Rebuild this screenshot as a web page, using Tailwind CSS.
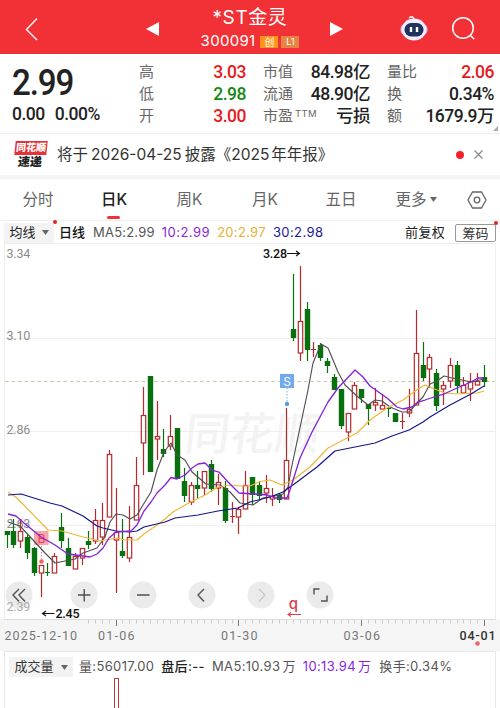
<!DOCTYPE html>
<html lang="zh-CN">
<head>
    <meta charset="UTF-8">
    <meta name="viewport" content="width=device-width, initial-scale=1.0">
    <title>*ST金灵 300091</title>
    <script src="https://cdn.jsdelivr.net/npm/@tailwindcss/browser@4"></script>
</head>
<body class="w-[500px] h-[708px] overflow-hidden bg-white font-[Inter,'Noto_Sans_CJK_SC',sans-serif] text-[#333] whitespace-nowrap">
    <!-- Title bar -->
    <header class="h-[54px] bg-[#f23136] text-white grid grid-cols-[159px_182px_159px]">
        <div class="flex items-center justify-between pl-[25px] pt-[3px]">
            <svg class="w-[14px] h-6" viewBox="0 0 14 24" fill="none" stroke="#fff" stroke-width="1.4"><path d="M12 1.5 1.5 12.5 12 23"/></svg>
            <svg class="w-[13px] h-[14px]" viewBox="0 0 13 14" fill="#fff"><path d="M0 7 13 0v14z"/></svg>
        </div>
        <div class="flex flex-col items-center pt-[6px]">
            <div class="text-[19px] leading-[23px] tracking-[0.6px]">*ST金灵</div>
            <div class="flex items-center gap-[3px] h-[26px] -mt-px">
                <span class="text-[15px] mr-[2px] tracking-[0.3px]">300091</span>
                <span class="w-[18px] h-[12px] mt-px bg-[#ff9418] text-[10px] leading-[12px] text-center">创</span>
                <span class="w-[18px] h-[12px] mt-px bg-[#e58543] text-[9px] leading-[12px] text-center">L1</span>
            </div>
        </div>
        <div class="flex items-center justify-between pr-[24px] pt-[3px]">
            <svg class="w-[13px] h-[14px] -ml-[11px]" viewBox="0 0 13 14" fill="#fff"><path d="M13 7 0 0v14z"/></svg>
            <div class="flex items-center gap-[23px]">
                <svg class="w-[28px] h-[27px]" viewBox="0 0 28 27">
                    <path d="M9 3q3-3 5 1" fill="none" stroke="#fff" stroke-width="1.5"/>
                    <rect x="0.5" y="9" width="27" height="11" rx="5" fill="#c9c3f4"/>
                    <ellipse cx="14" cy="14.5" rx="12.3" ry="11" fill="#f3edff"/>
                    <rect x="4.5" y="8" width="19" height="13.5" rx="6.5" fill="#20335c"/>
                    <path d="M11 12v5M17 12v5" stroke="#fff" stroke-width="2.4"/>
                </svg>
                <svg class="w-[25px] h-[25px]" viewBox="0 0 25 25" fill="none" stroke="#fff" stroke-width="1.5"><circle cx="12" cy="12" r="10.3"/><path d="m19.3 19.3 3.9 3.9"/></svg>
            </div>
        </div>
    </header>

    <!-- Quote -->
    <section class="relative h-[80px] flex pl-[12px] pr-[6px] border-b border-[#eee] text-[#222]">
        <div class="w-[127px] font-[Roboto] font-medium">
            <div class="text-[36px] leading-[36px] pt-[11px] tracking-[-1.2px] scale-x-[0.92] origin-left">2.99</div>
            <div class="flex gap-[10px] text-[17.5px] leading-5 pt-[3px] tracking-[-0.5px]"><span>0.00</span><span>0.00%</span></div>
        </div>
        <div class="grid grid-cols-3 gap-x-[17px] w-[355px] pt-[7px] auto-rows-[22px] text-[15px] leading-[22px] [&>div]:flex [&>div]:justify-between [&_b]:font-medium [&_b]:text-[17.500px] [&_b]:font-[Roboto,'Noto_Sans_CJK_SC'] [&_b]:tracking-[-0.5px] [&_span]:text-[#666]">
            <div><span>高</span><b class="text-[#e8191c]">3.03</b></div>
            <div><span>市值</span><b>84.98亿</b></div>
            <div><span>量比</span><b class="text-[#e8191c]">2.06</b></div>
            <div><span>低</span><b class="text-[#138a13]">2.98</b></div>
            <div><span>流通</span><b>48.90亿</b></div>
            <div><span>换</span><b>0.34%</b></div>
            <div><span>开</span><b class="text-[#e8191c]">3.00</b></div>
            <div><span class="flex">市盈<i class="not-italic text-[9.500px] leading-[17px] ml-[2px] tracking-[0.4px]">TTM</i></span><b>亏损</b></div>
            <div><span>额</span><b>1679.9万</b></div>
        </div>
        <svg class="absolute right-[2px] bottom-[2px] w-[5px] h-[5px]" viewBox="0 0 5 5" fill="#aaa"><path d="M5 0v5H0z"/></svg>
    </section>

    <!-- News strip -->
    <section class="h-[45px] flex items-center pl-[14px] pr-[17px] border-b-[4px] border-[#f4f4f4]">
        <div class="w-[33px] flex flex-col items-center font-black">
            <div class="w-[32px] h-[14px] -skew-x-6 bg-[#e43339] text-white text-[10px] leading-[13px] text-center">同花顺</div>
            <div class="-skew-x-6 text-[12px] leading-[14px] text-[#222]">速递</div>
        </div>
        <div class="ml-[10px] flex-1 text-[15.5px] text-[#333]">将于<span class="mx-[3px]">2026-04-25</span>披露《2025<span class="ml-[2px]">年年报》</span></div>
        <div class="w-2 h-2 rounded-full bg-[#f5222a]"></div>
        <svg class="ml-[10px] w-[9px] h-[9px]" viewBox="0 0 9 9" stroke="#888" stroke-width="1.2"><path d="m.5.5 8 8m0-8-8 8"/></svg>
    </section>

    <!-- Period tabs -->
    <nav class="h-[42px] flex items-center text-[15.5px] text-[#666] border-b border-[#f0f0f0] text-center">
        <div class="w-[76px]">分时</div>
        <div class="w-[76px] h-full relative leading-[42px] font-medium text-[#222]">日K<span class="absolute left-[31px] bottom-px w-[13px] h-[3px] rounded-full bg-[#f0313a]"></span></div>
        <div class="w-[75px]">周K</div>
        <div class="w-[76px]">月K</div>
        <div class="w-[76px]">五日</div>
        <div class="w-[76px] flex items-center justify-center gap-[3px] ml-[-1px]">更多<svg class="w-[7px] h-[5px]" viewBox="0 0 7 5" fill="#666"><path d="M0 0h7L3.5 5z"/></svg></div>
        <svg class="w-[20px] h-[18px] ml-[13px]" viewBox="0 0 20 18" fill="none" stroke="#666" stroke-width="1.3"><path d="M5.5 1h9L19 9l-4.500 8h-9L1 9z"/><circle cx="10" cy="9" r="2.800"/></svg>
    </nav>

    <!-- MA legend -->
    <section class="relative h-[22px] flex items-center pt-px pl-[4px] pr-[4px] text-[13px]">
        <div class="w-[50px] h-[20px] bg-[#f3f3f3] flex items-center justify-center gap-[6px] text-[#222]">均线<svg class="w-[7px] h-[5px]" viewBox="0 0 7 5" fill="#666"><path d="M0 0h7L3.500 5z"/></svg></div>
        <span class="absolute left-[53px] top-[-1px] w-1 h-1 rounded-full bg-[#e5222a]"></span>
        <span class="ml-[5px] font-medium text-[#111]">日线</span>
        <span class="ml-[8px] tracking-[0.2px] text-[#555]">MA5:2.99</span>
        <span class="ml-[7px] tracking-[0.5px] text-[#8a1fe0]">10:2.99</span>
        <span class="ml-[7px] tracking-[0.3px] text-[#e9b130]">20:2.97</span>
        <span class="ml-[7px] tracking-[0.4px] text-[#18189a]">30:2.98</span>
        <span class="ml-auto text-[#222] tracking-[0.3px]">前复权</span>
        <span class="ml-[10px] w-[41px] h-[18px] border border-[#999] rounded-[2px] text-center leading-[16px] text-[#333]">筹码</span>
        <span class="absolute right-[2px] top-0 w-1 h-1 rounded-full bg-[#e5222a]"></span>
    </section>

    <!-- Candles, averages and date axis -->
    <section class="h-[408px]">
        <svg class="block w-[500px] h-[408px]" viewBox="0 243 500 408">
            <text x="183" y="450" transform="translate(53 0) skewX(-6.700)" font-size="45" font-weight="500" fill="#f3f3f3">同花顺</text>
            <g stroke="#eee" fill="none">
                <path d="M4 243.500h492M4.500 243v376M495.500 243v376M5 338.500h490M5 431.500h490M5 525.500h490"/>
            </g>
            <path d="M5 381.500h490" stroke="#c9c8aa" stroke-dasharray="3.500 3"/>
            <rect x="0" y="619" width="500" height="32" fill="#f5f5f5"/>
            <path d="M4 619.500h492" stroke="#ddd"/>
            <g font-family="Roboto" font-size="12.500" fill="#8c8c8c" letter-spacing="-.2">
                <text x="6.500" y="257.500">3.34</text>
                <text x="6.500" y="340">3.10</text>
                <text x="6.500" y="434">2.86</text>
                <text x="6.500" y="528">2.63</text>
            </g>
            <g>
                <rect x="34" y="531" width="14.500" height="14" fill="#f8a4aa"/>
                <text x="41.500" y="542.500" text-anchor="middle" font-size="12" fill="#e9404d">B</text>
                <path d="M41.500 546v13" stroke="#f08088" stroke-dasharray="1.500 1.500"/>
                <circle cx="41.500" cy="561.500" r="2.200" fill="#f0606a"/>
                <path d="M287 388v14" stroke="#7aaae0" stroke-dasharray="1.500 1.500"/>
                <circle cx="287" cy="404" r="2.200" fill="#5f9bdc"/>
            </g>
            <g id="candles" stroke-width="1.200"></g>
            <g fill="none" stroke-width="1.150" stroke-linejoin="round">
                <polyline stroke="#505050" points="8,522 20,526 34,541 45,553 55,563 75,559 83,553 97,548 105,537 110,522 116,514 123,515 130,519 137,515 143,505 151,492 157,470 164,452 171,443 177,455 185,460 192,472 206,484 220,485 230,492 240,503 253,505 263,498 283,494 288,487 291,470 308,390 313,363 321,344 328,348 338,372 345,385 358,397 368,405 375,400 382,401 390,407 402,412 409,412 418,402 423,397 430,384 437,381 444,376 452,378 457,379 471,382 484,379"/>
                <polyline stroke="#f0b533" points="8,492 17,498 48,530 62,531 83,537 100,541 117,538 125,540 137,540 144,534 157,525 165,519 173,512 187,504 205,495 218,487 230,485 240,486 250,486 260,481.500 270,480 282,485 293,480 310,467 328,448 347,438 357,433 370,420 387,408 403,400 418,389 425,385 437,390 445,393 457,394 477,393 484,391"/>
                <polyline stroke="#14148c" points="8,495 21,494 50,503 62,506 83,516 97,526 103,528 116,531 130,532 137,531 144,527 165,522 175,518 198,515 218,511 238,508 250,502 270,497 283,492 297,482 317,467 335,451 350,448 375,443 392,436 409,430 423,422 430,417 450,405 471,394 484,386"/>
                <polyline stroke="#8320d8" stroke-width="1.300" points="8,514 16,516 24,523 41,537 55,545 68,554 83,556 90,557 97,554 103,548 109,538 116,532 131,531 137,525 144,511 151,502 157,493 165,485 171,477.500 177,479 185,475 192,468 198,464 205,463 212,470 219,472 228,482 239,493 255,494 268,495 275,498 287,498 290,490 300,458 312,432 328,402 338,388 355,370 363,377 370,386 387,398 397,407 403,409 412,407 418,402 425,400 437,396 444,394 457,388 471,382 478,378 484,378"/>
            </g>
            <rect x="280" y="374" width="14" height="14" fill="#72aaf0"/>
            <text x="287" y="385.500" text-anchor="middle" font-size="12" fill="#fff">S</text>

            <!-- zoom and pan buttons -->
            <g fill="#e4e4e4" fill-opacity=".75">
                <circle cx="19" cy="595" r="13.500"/><circle cx="84" cy="595" r="13.500"/><circle cx="143" cy="595" r="13.500"/>
                <circle cx="202" cy="595" r="13.500"/><circle cx="261" cy="595" r="13.500"/><circle cx="320" cy="595" r="13.500"/>
            </g>
            <text x="6.500" y="610.500" font-family="Roboto" font-size="12.500" letter-spacing="-.2" fill="#aaa">2.39</text>
            <g fill="none" stroke="#505050" stroke-width="1.400">
                <path d="m19 589-6 6 6 6.500M25 589l-6 6 6 6.500M78 595h12.500M84.200 589v12.500M137 595h12.500M204 589l-6 6 6 6.500M314 594.500V589h5.500M327 595.500v5.500h-6"/>
                <path d="m259 589 6 6-6 6.500" stroke="#c8c8c8"/>
            </g>
            <g font-family="Roboto" font-weight="500" font-size="12.500" fill="#111">
                <text x="263" y="258" textLength="24">3.28</text>
                <text x="55.500" y="618" textLength="24">2.45</text>
                <path d="M287 253.500h12.500m-3.500-2.500 3.500 2.500-3.500 2.500M54.500 613.500h-12m3.500-2.500-3.500 2.500 3.500 2.500" fill="none" stroke="#111" stroke-width="1.100"/>
            </g>
            <text x="293.500" y="608.500" text-anchor="middle" font-size="15" font-weight="500" fill="#e04045">q</text>
            <path d="M301 614.500h-13m3-2-3 2 3 2" fill="none" stroke="#e04045" stroke-width="1.100"/>

            <g id="ticks" stroke="#ccc"></g>
            <g font-family="Roboto" font-size="12.500" fill="#777">
                <text x="4.500" y="639.500" textLength="72.500">2025-12-10</text>
                <text x="98" y="639.500" textLength="36.500">01-06</text>
                <text x="221" y="639.500" textLength="36.500">01-30</text>
                <text x="343.500" y="639.500" textLength="36.500">03-06</text>
                <text x="459.500" y="639.500" textLength="36" font-weight="500" fill="#333">04-01</text>
            </g>
            <circle cx="477.500" cy="643.500" r="2.300" fill="#e8676a"/>
        </svg>
    </section>

    <!-- Volume -->
    <section class="mx-[4px] h-[57px] border border-b-0 border-[#e8e8e8] text-[13px] text-[#555]">
        <div class="flex items-center pl-[4px] pt-[5px] h-[25px] tracking-[0.350px]">
            <div class="w-[64px] h-[20px] bg-[#f3f3f3] flex items-center justify-center gap-[7px] tracking-normal text-[#333]">成交量<svg class="w-[7px] h-[5px]" viewBox="0 0 7 5" fill="#666"><path d="M0 0h7L3.500 5z"/></svg></div>
            <span class="ml-[6px]">量:56017.00</span>
            <span class="ml-[7px] font-medium text-[#222]">盘后:--</span>
            <span class="ml-[7px]">MA5:10.93<span class="ml-[2px]">万</span></span>
            <span class="ml-[7px] text-[#8a1fe0]">10:13.94<span class="ml-[2px]">万</span></span>
            <span class="ml-[8px]">换手:0.34%</span>
        </div>
        <div class="ml-[109px] mt-[1px] w-[5px] h-[32px] border border-[#b5383d]"></div>
    </section>

    <script>
        // [direction, high, body top, body bottom, low] in chart y units
        const candles = [
            ['g', 531, 531, 535, 548], ['g', 519, 531, 545, 548], ['r', 519, 531, 541, 548], ['g', 535, 537, 553, 559],
            ['g', 547, 548, 573, 576], ['r', 565, 565, 573, 597], ['g', 563, 572, 573, 576], ['r', 553, 556, 573, 573],
            ['g', 513, 527, 541, 548], ['g', 538, 548, 566, 566], ['r', 553, 556, 569, 569], ['r', 548, 548, 558, 565],
            ['g', 531, 541, 545, 549], ['r', 509, 520, 541, 544], ['r', 503, 520, 537, 545], ['r', 450, 454, 517, 517],
            ['r', 488, 532, 540, 593], ['g', 519, 551, 556, 558], ['r', 506, 537, 558, 562], ['r', 457, 485, 520, 520],
            ['r', 387, 415, 443, 475], ['g', 376, 376, 472, 472], ['r', 401, 436, 439, 460], ['g', 429, 449, 454, 457],
            ['r', 415, 436, 446, 450], ['g', 428, 428, 479, 479], ['g', 468, 481, 496, 502], ['r', 482, 485, 502, 505],
            ['g', 471, 485, 489, 498], ['r', 471, 471, 488, 495], ['g', 460, 464, 489, 492], ['r', 474, 482, 488, 505],
            ['g', 481, 488, 521, 523], ['r', 502, 516, 517, 523], ['r', 507, 509, 517, 534], ['r', 471, 485, 509, 509],
            ['g', 477, 477, 495, 505], ['g', 482, 485, 496, 500], ['r', 475, 488, 493, 503], ['r', 488, 496, 499, 506],
            ['g', 493, 495, 500, 503], ['r', 408, 460, 499, 499], ['g', 274, 329, 338, 341], ['r', 266, 321, 353, 361],
            ['g', 302, 309, 350, 361], ['r', 342, 349, 350, 357], ['g', 343, 345, 358, 361], ['g', 358, 361, 366, 373],
            ['g', 374, 377, 390, 390], ['g', 389, 389, 426, 429], ['r', 413, 413, 432, 441], ['r', 382, 385, 409, 409],
            ['g', 389, 389, 398, 403], ['g', 404, 404, 409, 425], ['r', 388, 402, 405, 411], ['r', 394, 405, 409, 409],
            ['g', 407, 408, 409, 417], ['g', 413, 413, 422, 422], ['r', 413, 421, 422, 429], ['r', 389, 409, 413, 417],
            ['r', 310, 353, 405, 405], ['g', 342, 365, 378, 381], ['r', 354, 357, 369, 388], ['g', 369, 373, 406, 411],
            ['r', 381, 385, 389, 405], ['r', 358, 365, 381, 388], ['g', 361, 365, 386, 393], ['r', 377, 385, 393, 393],
            ['r', 373, 381, 389, 401], ['r', 373, 381, 385, 385], ['g', 365, 377, 382, 387]
        ];
        const step = 6.82;
        let html = '';
        candles.forEach(([dir, high, top, bottom, low], i) => {
            const x = Math.round(6.5 + i * step) + 0.5;
            const color = dir === 'g' ? '#08700c' : '#b8292d';
            if (bottom - top <= 1) {
                html += `<path d="M${x} ${high}V${low}M${x - 2.5} ${top + 0.5}h5" stroke="${color}"/>`;
            } else if (dir === 'g') {
                html += `<path d="M${x} ${high}V${low}" stroke="${color}"/><rect x="${x - 2.7}" y="${top}" width="5.4" height="${bottom - top}" fill="${color}"/>`;
            } else {
                html += `<path d="M${x} ${high}V${top}M${x} ${bottom}V${low}" stroke="${color}"/><rect x="${x - 2.2}" y="${top + 0.5}" width="4.4" height="${bottom - top - 0.5}" fill="none" stroke="${color}"/>`;
            }
        });
        document.getElementById('candles').innerHTML = html;

        // One tick per trading day, longer and darker on labelled dates
        let ticks = '';
        for (let i = 12; i <= 70; i++) {
            const x = Math.round(6.5 + i * step) + 0.5;
            const major = (i - 16) % 18 === 0;
            ticks += `<path d="M${x} 620v${major ? 6 : 3.5}"${major ? ' stroke="#777"' : ''}/>`;
        }
        document.getElementById('ticks').innerHTML = ticks;
    </script>
</body>
</html>
